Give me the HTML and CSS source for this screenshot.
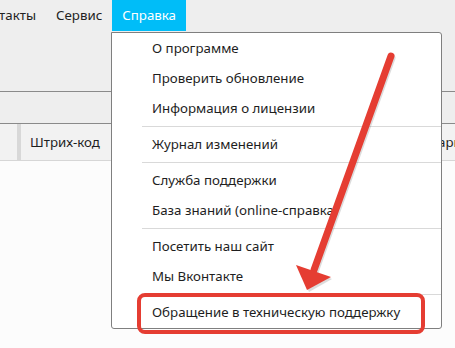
FILE: index.html
```html
<!DOCTYPE html>
<html lang="ru">
<head>
    <meta charset="UTF-8">
    <title>Справка</title>
    <link rel="stylesheet" href="styles.css">
</head>
<body>
    <div class="window">
        <div class="menubar">
            <div class="menu-item">Контакты</div>
            <div class="menu-item">Сервис</div>
            <div class="menu-item active">Справка</div>
        </div>

        <div class="toolbar"></div>

        <div class="filter-bar"></div>

        <div class="grid-header">
            <div class="col col-first"></div>
            <div class="col col-code">Штрих-код</div>
            <div class="col col-note">Комментарий</div>
        </div>

        <div class="grid-body"></div>

        <!-- dropdown of the "Справка" menu -->
        <div class="dropdown">
            <div class="dd-item">О программе</div>
            <div class="dd-item">Проверить обновление</div>
            <div class="dd-item">Информация о лицензии</div>
            <div class="dd-sep"></div>
            <div class="dd-item">Журнал изменений</div>
            <div class="dd-sep"></div>
            <div class="dd-item">Служба поддержки</div>
            <div class="dd-item">База знаний (online-справка)</div>
            <div class="dd-sep"></div>
            <div class="dd-item">Посетить наш сайт</div>
            <div class="dd-item">Мы Вконтакте</div>
            <div class="dd-sep"></div>
            <div class="dd-item">Обращение в техническую поддержку</div>
        </div>

        <!-- annotation -->
        <svg class="annotation" width="455" height="348" viewBox="0 0 455 348">
            <g class="shadow">
                <line x1="392" y1="58" x2="315" y2="272" />
                <polygon points="309,292 298,267 332,279" />
            </g>
            <g class="arrow">
                <line x1="391" y1="56" x2="314" y2="270" />
                <polygon points="307,290 296,265 331,277" />
            </g>
            <rect class="frame" x="139" y="295" width="284" height="37" rx="6" />
        </svg>
    </div>
</body>
</html>
```

FILE: styles.css
```css
* {
    margin: 0;
    padding: 0;
    box-sizing: border-box;
}

body {
    font-family: 'Noto Sans', 'Open Sans', sans-serif;
    font-size: 13.3px;
    color: #1e1e1e;
    background-color: #eeeeee;
    overflow: hidden;
}

.window {
    position: relative;
    width: 455px;
    height: 348px;
    overflow: hidden;
}

.menubar {
    display: flex;
    height: 31px;
    margin-left: -35px;
}

.menu-item {
    padding: 0 10px;
    line-height: 31px;
    color: #222;
}

.menu-item.active {
    background-color: #00bdf8;
    color: white;
}

.toolbar {
    height: 60px;
}

.filter-bar {
    height: 33px;
    border-top: 1px solid #8a8a8a;
    border-bottom: 1px solid #8a8a8a;
}

.grid-header {
    display: flex;
    height: 37px;
    background-color: #f2f2f2;
    border-bottom: 1px solid #d6d6d6;
}

.col {
    flex-shrink: 0;
    line-height: 36px;
    padding-left: 9px;
    border-left: 4px solid #d8d8d8;
    white-space: nowrap;
}

.col-first {
    width: 17px;
    padding: 0;
    border-left: none;
}

.col-code {
    width: 363px;
}

.col-note {
    border-left: none;
    padding-left: 0;
}

.grid-body {
    height: 200px;
    background-color: #fcfcfc;
}

.dropdown {
    position: absolute;
    left: 111px;
    top: 32px;
    width: 331px;
    height: 297px;
    background-color: white;
    border: 1px solid #7f7f7f;
    border-radius: 0 3px 3px 3px;
}

.dd-item {
    height: 30px;
    line-height: 31px;
    padding-left: 40px;
    color: #1e1e1e;
    white-space: nowrap;
}

.dd-sep {
    height: 6px;
    margin-left: 30px;
    border-top: 3px solid white;
    border-bottom: 2px solid white;
    background-color: #d9d9d9;
}

.annotation {
    position: absolute;
    left: 0;
    top: 0;
}

.arrow line,
.shadow line {
    stroke-width: 7;
    stroke-linecap: round;
}

.arrow line {
    stroke: #e53d32;
}

.arrow polygon {
    fill: #e53d32;
}

.shadow {
    opacity: 0.25;
}

.shadow line {
    stroke: #777;
}

.shadow polygon {
    fill: #777;
}

.frame {
    fill: none;
    stroke: #e53d32;
    stroke-width: 4;
}
```
